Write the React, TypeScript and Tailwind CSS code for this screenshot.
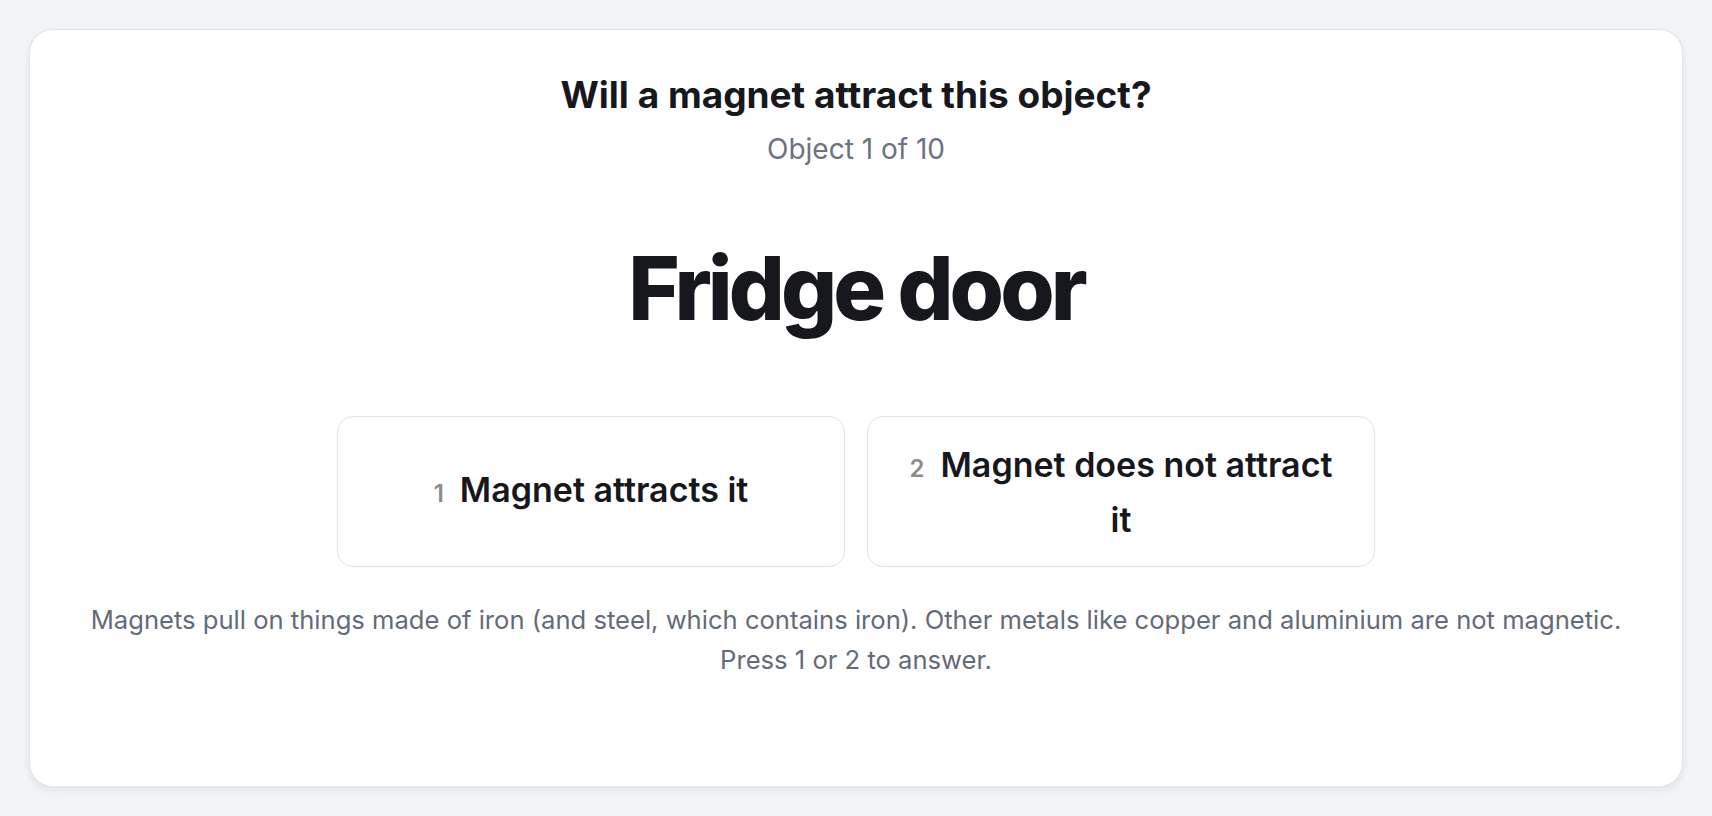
import React from "react";

export default function App() {
  return (
    <div className="h-screen w-full bg-[#f3f4f7] p-[29px] font-['Inter','Liberation_Sans',sans-serif]">
      <div className="flex h-full flex-col items-center rounded-[24px] border border-[#e3e5ea] bg-white pt-[43px] shadow-[0_3px_8px_rgba(15,23,42,0.08)]">
        <h1 className="text-[37px] font-bold leading-[44px] text-[#16181d]">
          Will a magnet attract this object?
        </h1>
        <p className="mt-[14px] text-[28px] leading-[36px] text-[#6b7280]">Object 1 of 10</p>
        <div className="mt-[77px] text-[88px] font-extrabold leading-[88px] tracking-[-0.045em] text-[#16181d]">
          Fridge door
        </div>
        <div className="mt-[84px] grid w-[1038px] grid-cols-2 gap-[22px]">
          <button className="flex h-[151px] items-center justify-center rounded-2xl border border-[#e2e4e9] bg-white px-9 text-center">
            <span className="text-[34px] font-semibold leading-[51px] text-[#16181d]">
              <span className="mr-[16px] text-[24px] font-semibold text-[#8c8c8c]">1</span>
              Magnet attracts it
            </span>
          </button>
          <button className="flex h-[151px] items-center justify-center rounded-2xl border border-[#e2e4e9] bg-white px-9 text-center">
            <span className="text-[34px] font-semibold leading-[51px] text-[#16181d]">
              <span className="mr-[16px] text-[24px] font-semibold text-[#8c8c8c]">2</span>
              Magnet does not attract it
            </span>
          </button>
        </div>
        <p className="mt-[33px] text-center text-[25.6px] leading-[40px] text-[#646b78]">
          Magnets pull on things made of iron (and steel, which contains iron). Other metals like copper and aluminium are not magnetic.
          <br />
          Press 1 or 2 to answer.
        </p>
      </div>
    </div>
  );
}
